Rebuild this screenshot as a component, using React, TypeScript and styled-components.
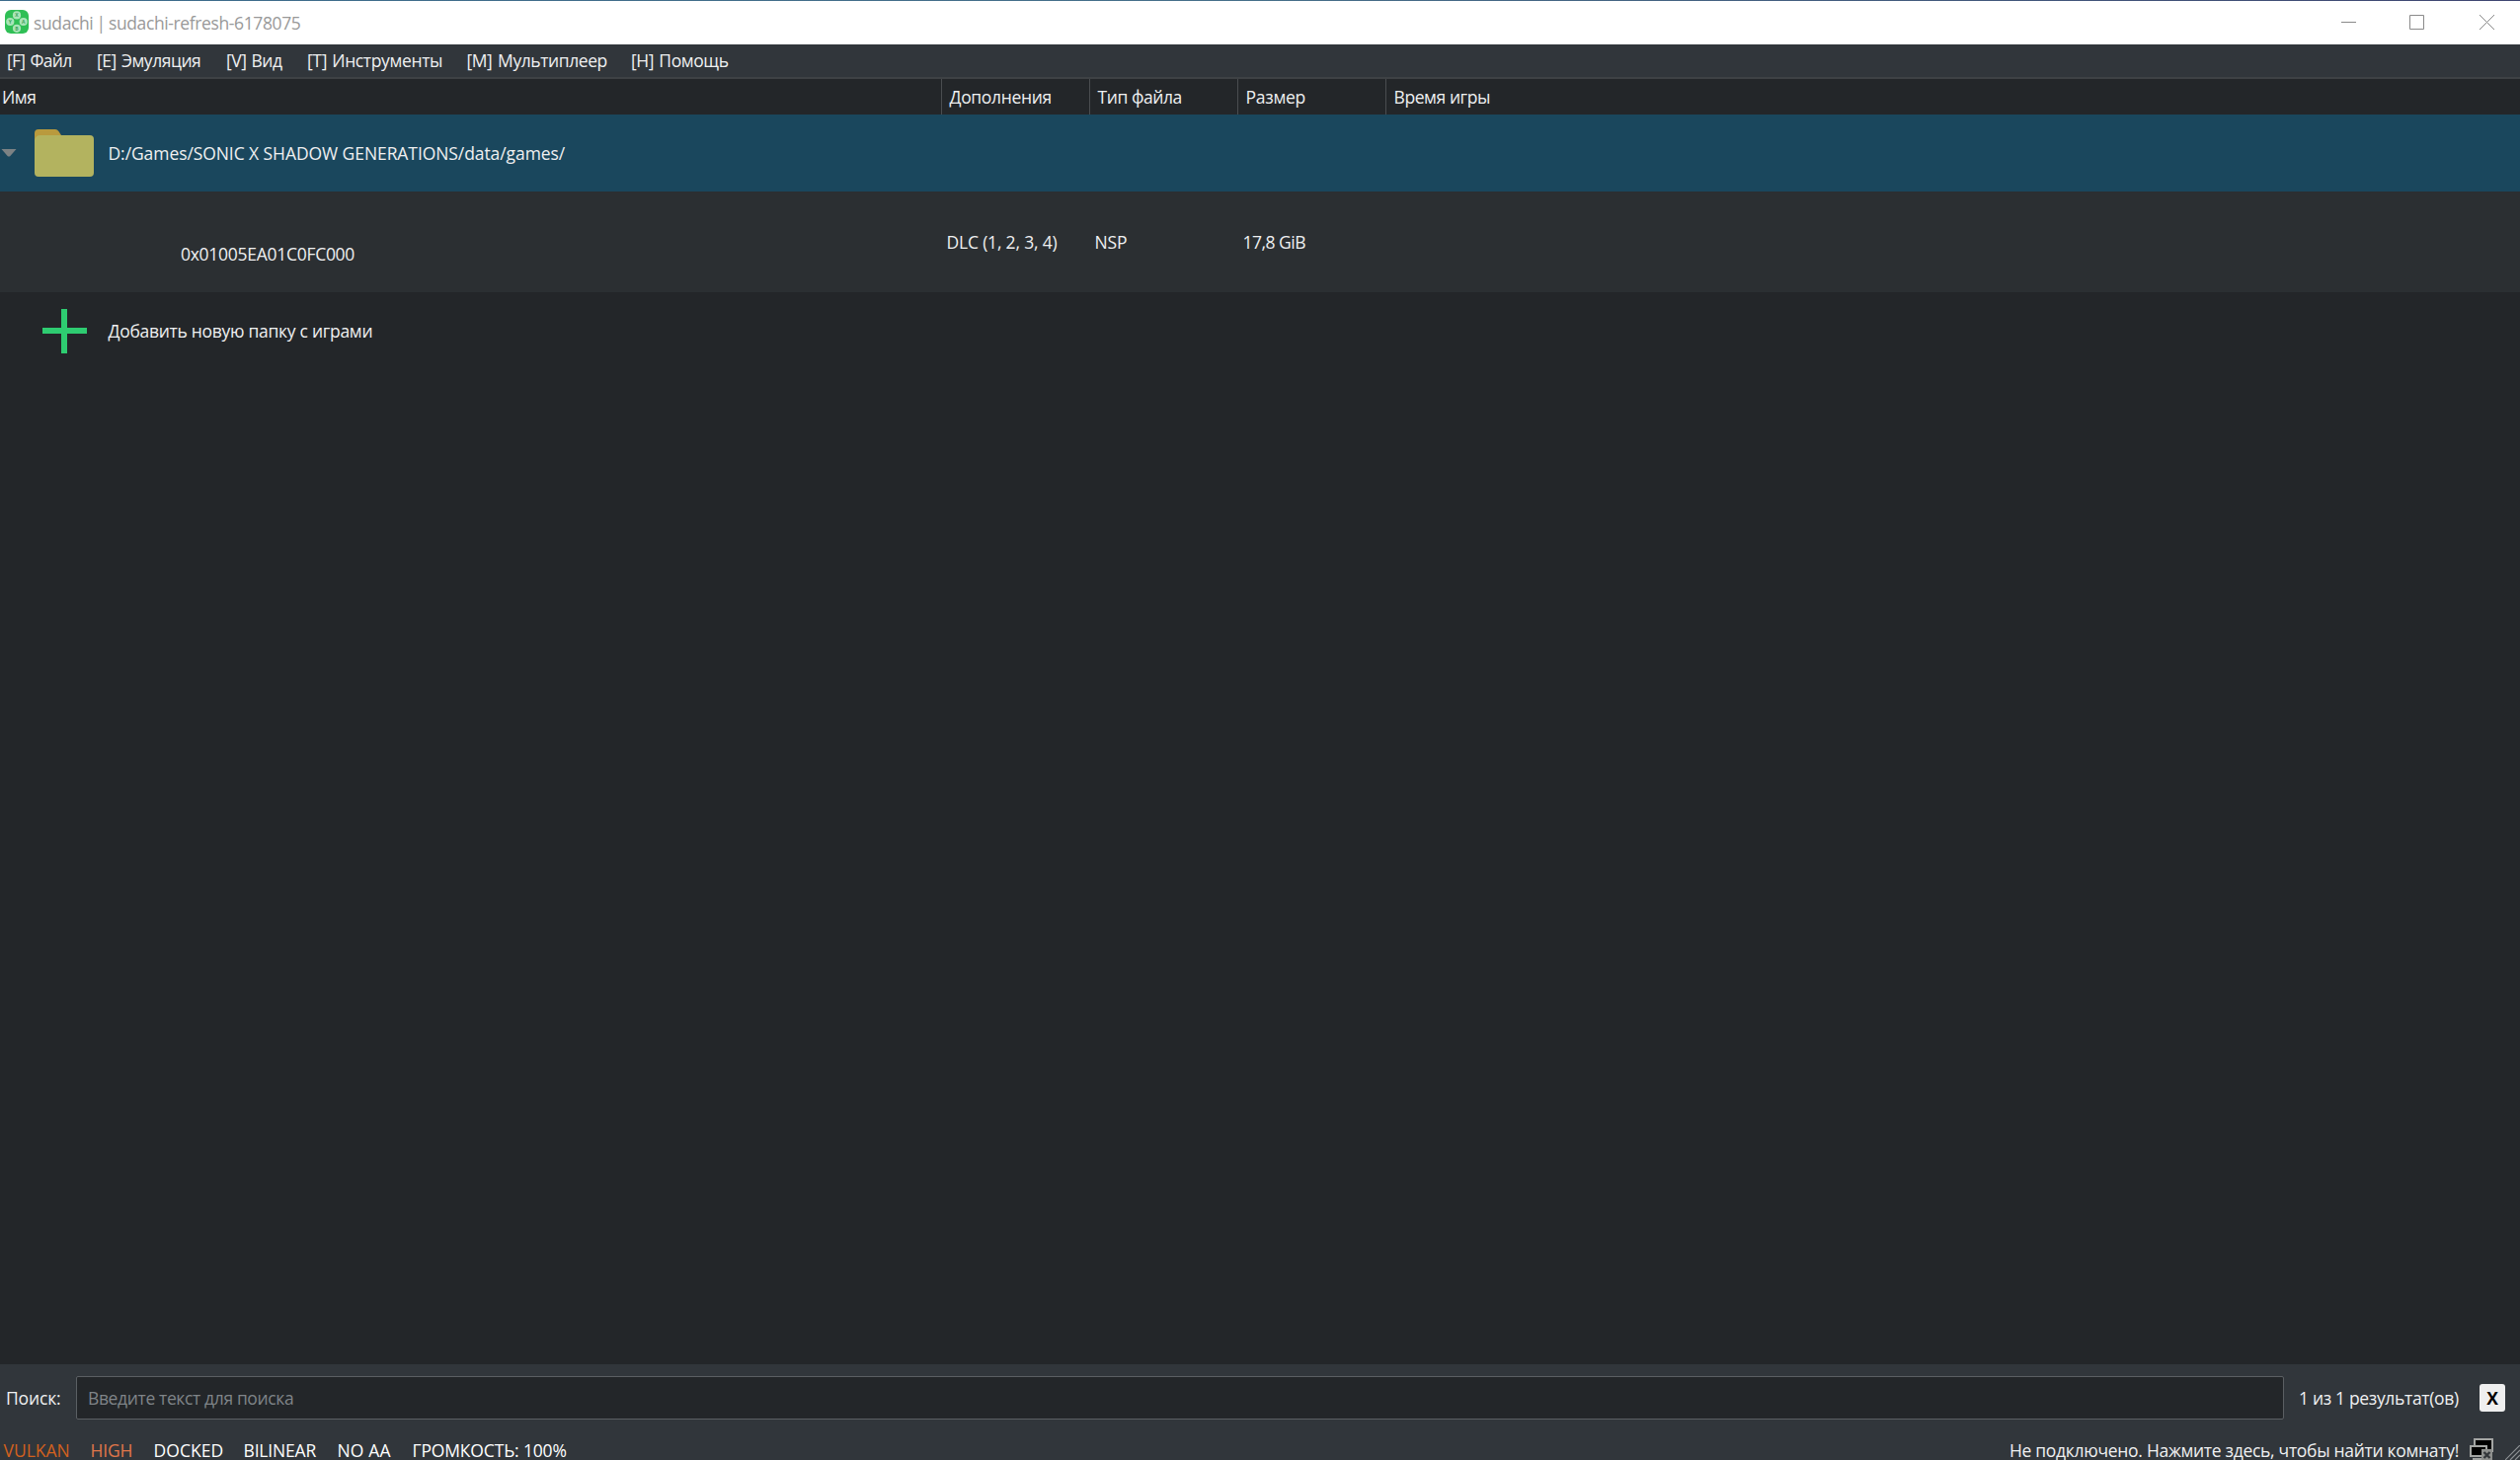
import React from 'react';
import styled, { createGlobalStyle } from 'styled-components';

const GlobalStyle = createGlobalStyle`
  * { box-sizing: border-box; }
  body { margin: 0; background: #31363b; overflow: hidden; }
`;

const Window = styled.div`
  display: flex;
  flex-direction: column;
  width: 100%;
  height: 100vh;
  overflow: hidden;
  background: #31363b;
  color: #eff0f1;
  font-family: 'Open Sans', 'Noto Sans', sans-serif;
  font-size: 17.5px;
  line-height: 24px;
  white-space: nowrap;
`;

const Label = styled.span<{ $track: number; $word?: number }>`
  display: block;
  letter-spacing: ${(p) => p.$track}px;
  word-spacing: ${(p) => p.$word ?? 0}px;
`;

const TopEdge = styled.div`
  flex: none;
  height: 1px;
  background: linear-gradient(90deg, #3c6c8c, #46708a 50%, #3f4672);
`;

const TitleBar = styled.header`
  display: flex;
  flex: none;
  align-items: center;
  height: 44px;
  padding-left: 5px;
  background: #fff;
  color: #999;
`;

const AppIcon = styled.svg`
  width: 24px;
  height: 24px;
  margin: 0 5px 2px 0;
`;

const WindowControls = styled.div`
  display: flex;
  margin-left: auto;
`;

const ControlButton = styled.button<{ $width: number }>`
  display: flex;
  align-items: center;
  justify-content: center;
  width: ${(p) => p.$width}px;
  height: 44px;
  padding: 0 0 1px;
  border: 0;
  background: none;
  color: #8a8a8a;
`;

const MenuBar = styled.nav`
  display: flex;
  flex: none;
  align-items: center;
  height: 33px;
  padding: 0 0 1px 7px;
`;

const MenuItem = styled(Label)<{ $width: number }>`
  width: ${(p) => p.$width}px;
`;

const columns = '953px 150px 150px 150px 1fr';

const TableHeader = styled.div`
  display: grid;
  flex: none;
  grid-template-columns: ${columns};
  height: 38px;
  border-top: 2px solid #3e4245;
  background: #232629;
`;

const HeaderCell = styled.div<{ $first?: boolean }>`
  display: flex;
  align-items: center;
  padding-left: ${(p) => (p.$first ? 2 : 7.5)}px;
  border-left: ${(p) => (p.$first ? 0 : 1)}px solid #4a4d50;
`;

const GameList = styled.main`
  flex: 1;
  min-height: 0;
  background: #232629;
`;

const FolderRow = styled.div<{ $selected?: boolean }>`
  display: flex;
  align-items: center;
  height: 78px;
  background: ${(p) => (p.$selected ? '#1a475d' : 'transparent')};
`;

const Expander = styled.div`
  display: flex;
  width: 35px;
  padding-left: 1px;
`;

const IconSlot = styled.div`
  display: flex;
  width: 74.5px;
`;

const GameRow = styled.div`
  display: grid;
  grid-template-columns: ${columns};
  align-items: center;
  height: 102px;
  background: #2b2f32;
`;

const GameCell = styled.div`
  padding-left: 5.5px;
`;

const GameTitle = styled.div`
  padding: 24px 0 0 183px;
`;

const SearchBar = styled.div`
  display: flex;
  flex: none;
  align-items: center;
  height: 68px;
  padding: 0 15px 0 6px;
`;

const SearchLabel = styled(Label)`
  width: 71px;
`;

const SearchInput = styled.input`
  width: 2236px;
  height: 44px;
  padding: 0 11px;
  border: 1px solid #5b5f63;
  border-radius: 2px;
  outline: 0;
  background: #232629;
  color: #eff0f1;
  font: inherit;
  letter-spacing: -0.37px;
  &::placeholder { color: #7f8488; opacity: 1; }
`;

const ResultCount = styled(Label)`
  margin-left: 15px;
`;

const ClearButton = styled.button`
  width: 26px;
  height: 28px;
  margin-left: auto;
  padding: 0;
  border: 0;
  border-radius: 3px;
  background: #efefef;
  color: #000;
  font: bold 17.5px/28px 'Open Sans', sans-serif;
`;

const StatusBar = styled.footer`
  display: flex;
  flex: none;
  height: 29px;
  padding: 7px 0 0 3.5px;
  overflow: hidden;
`;

const StatusText = styled(Label)`
  margin-top: 2px;
  line-height: 20px;
`;

const StatusItem = styled(StatusText)<{ $width: number; $color?: string }>`
  width: ${(p) => p.$width}px;
  color: ${(p) => p.$color ?? '#fff'};
`;

const RoomStatus = styled.div`
  display: flex;
  margin-left: auto;
`;

const RoomIcon = styled.svg`
  width: 24px;
  height: 24px;
  margin-left: 11px;
`;

const SizeGrip = styled.svg`
  width: 15px;
  height: 15px;
  margin: 7px 0 0 12px;
`;

const menus = [
  { text: '[F] Файл', width: 91, track: -0.72, word: 1.4 },
  { text: '[E] Эмуляция', width: 131, track: -0.46, word: 1 },
  { text: '[V] Вид', width: 82, track: -0.4, word: 0.6 },
  { text: '[T] Инструменты', width: 161.5, track: -0.36, word: 1 },
  { text: '[M] Мультиплеер', width: 166.5, track: -0.42, word: 1.5 },
  { text: '[H] Помощь', width: 110, track: -0.4, word: 1 },
];

const headers = [
  { text: 'Имя', track: -0.5 },
  { text: 'Дополнения', track: -0.33 },
  { text: 'Тип файла', track: -0.44 },
  { text: 'Размер', track: -0.27 },
  { text: 'Время игры', track: -0.42 },
];

const statuses = [
  { text: 'VULKAN', width: 88, track: -0.02, color: '#d2611e' },
  { text: 'HIGH', width: 64, track: -0.17, color: '#e0764a' },
  { text: 'DOCKED', width: 91, track: 0.05 },
  { text: 'BILINEAR', width: 95, track: -0.17 },
  { text: 'NO AA', width: 76, track: 0.15 },
  { text: 'ГРОМКОСТЬ: 100%', width: 170, track: -0.16 },
];

const faceButtons = [
  { x: 12, y: 5.4, letter: 'X' },
  { x: 5.3, y: 12, letter: 'Y' },
  { x: 18.7, y: 12, letter: 'A' },
  { x: 12, y: 18.8, letter: 'B' },
];

export default function App() {
  return (
    <Window>
      <GlobalStyle />
      <TopEdge />
      <TitleBar>
        <AppIcon viewBox="0 0 24 24">
          <rect width="24" height="24" rx="6" fill="#2fbf55" />
          {faceButtons.map((b) => (
            <g key={b.letter}>
              <circle cx={b.x} cy={b.y} r="4.1" fill="#a9e5b8" />
              <text x={b.x} y={b.y + 1.8} textAnchor="middle" fontSize="5" fontWeight="700" fill="#3fa45c">
                {b.letter}
              </text>
            </g>
          ))}
        </AppIcon>
        <Label $track={-0.38} $word={-1}>sudachi | sudachi-refresh-6178075</Label>
        <WindowControls>
          <ControlButton $width={63} aria-label="Свернуть">
            <svg width="15" height="15"><path d="M0 7.5H15" stroke="currentColor" /></svg>
          </ControlButton>
          <ControlButton $width={75} aria-label="Развернуть">
            <svg width="15" height="15"><path d="M.5.5H14.5V14.5H.5Z" fill="none" stroke="currentColor" /></svg>
          </ControlButton>
          <ControlButton $width={67} aria-label="Закрыть">
            <svg width="15" height="15"><path d="M0 0L15 15M15 0L0 15" stroke="currentColor" /></svg>
          </ControlButton>
        </WindowControls>
      </TitleBar>

      <MenuBar>
        {menus.map((m) => (
          <MenuItem key={m.text} $width={m.width} $track={m.track} $word={m.word}>{m.text}</MenuItem>
        ))}
      </MenuBar>

      <TableHeader>
        {headers.map((h, i) => (
          <HeaderCell key={h.text} $first={i === 0}>
            <Label $track={h.track}>{h.text}</Label>
          </HeaderCell>
        ))}
      </TableHeader>

      <GameList>
        <FolderRow $selected>
          <Expander>
            <svg width="16" height="8"><path d="M.5 0H15.5L9.2 7.2Q8 8 6.8 7.2Z" fill="#7c8284" /></svg>
          </Expander>
          <IconSlot>
            <svg width="60" height="48">
              <path d="M0 14V4Q0 0 4 0H21Q23 0 24.4 2L27 6V14Z" fill="#b99a3d" />
              <path d="M0 11Q1 6 6 6H56Q60 6 60 10V44Q60 48 56 48H4Q0 48 0 44Z" fill="#b3b35f" />
            </svg>
          </IconSlot>
          <Label $track={-0.08}>D:/Games/SONIC X SHADOW GENERATIONS/data/games/</Label>
        </FolderRow>
        <GameRow>
          <GameTitle><Label $track={-0.28}>0x01005EA01C0FC000</Label></GameTitle>
          <GameCell><Label $track={-0.19}>DLC (1, 2, 3, 4)</Label></GameCell>
          <GameCell><Label $track={-0.14}>NSP</Label></GameCell>
          <GameCell><Label $track={-0.5}>17,8 GiB</Label></GameCell>
        </GameRow>
        <FolderRow>
          <Expander />
          <IconSlot>
            <svg width="60" height="46"><path d="M27 1H33V20H53V26H33V46H27V26H8V20H27Z" fill="#2ecc71" /></svg>
          </IconSlot>
          <Label $track={-0.29}>Добавить новую папку с играми</Label>
        </FolderRow>
      </GameList>

      <SearchBar>
        <SearchLabel $track={-0.16}>Поиск:</SearchLabel>
        <SearchInput placeholder="Введите текст для поиска" />
        <ResultCount $track={-0.33}>1 из 1 результат(ов)</ResultCount>
        <ClearButton>X</ClearButton>
      </SearchBar>

      <StatusBar>
        {statuses.map((s) => (
          <StatusItem key={s.text} $width={s.width} $track={s.track} $color={s.color}>{s.text}</StatusItem>
        ))}
        <RoomStatus>
          <StatusText $track={-0.3}>Не подключено. Нажмите здесь, чтобы найти комнату!</StatusText>
          <RoomIcon viewBox="0 0 24 24">
            <path d="M5 1H23V13H5Z" fill="#000" stroke="#a3a5a3" strokeWidth="2" />
            <path d="M1 8H17V18H1Z" fill="#000" stroke="#a3a5a3" strokeWidth="2" />
            <path d="M3 20H13V24H3Z" fill="#a3a5a3" />
            <path d="M12 11H23V24H12Z" fill="#8e908e" />
            <path d="M14.5 14L20.5 20M20.5 14L14.5 20" stroke="#33373a" strokeWidth="2.4" />
          </RoomIcon>
          <SizeGrip viewBox="0 0 15 15">
            <path d="M0 15L15 0M5 15L15 5M10 15L15 10" stroke="#8d9194" strokeWidth="1.2" />
          </SizeGrip>
        </RoomStatus>
      </StatusBar>
    </Window>
  );
}
